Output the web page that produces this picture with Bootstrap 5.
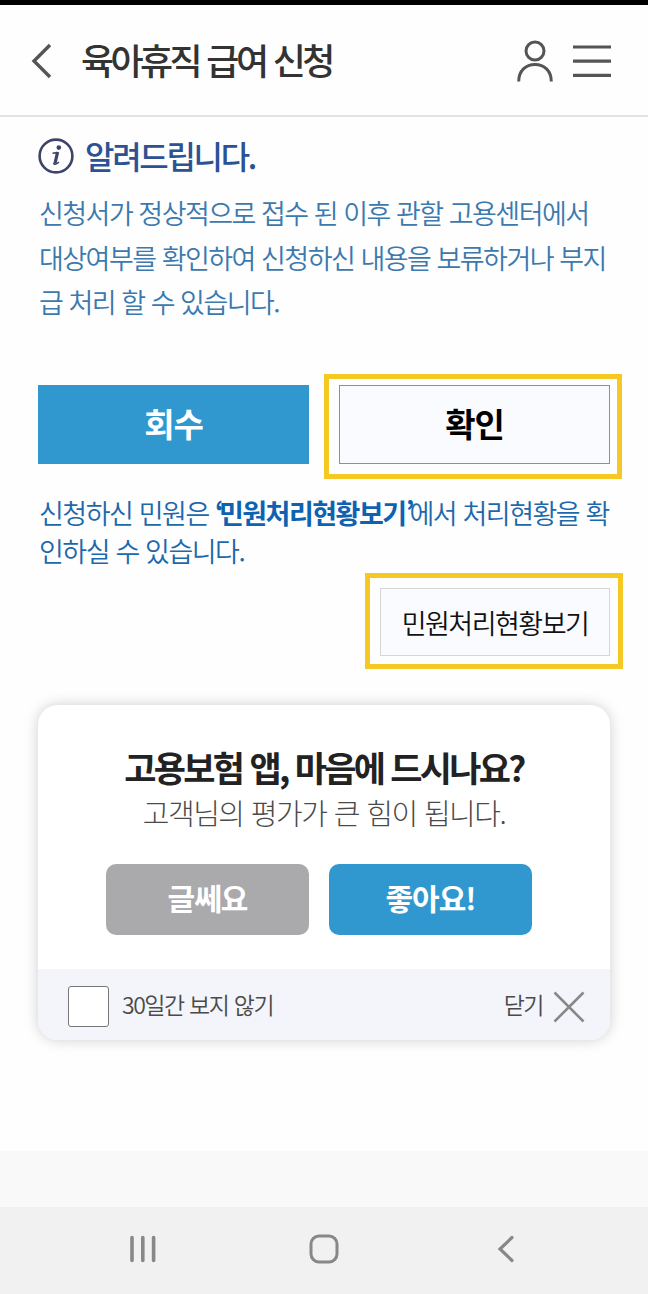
<!DOCTYPE html>
<html lang="ko">
<head>
<meta charset="utf-8">
<meta name="viewport" content="width=device-width, initial-scale=1">
<title>육아휴직 급여 신청</title>
<link rel="stylesheet" href="https://cdn.jsdelivr.net/npm/bootstrap@5.3.0/dist/css/bootstrap.min.css">
<style>
body{font-family:"Noto Sans CJK KR",sans-serif;background:#fefefe;width:648px;height:1294px;overflow:hidden;white-space:nowrap}
svg{display:block;flex:none}
.status-strip{height:5px;background:#000}
.top-bar{height:112px;border-bottom:2px solid #e2e2e2;padding:2px 37px 0 31px}
.page-title{font-size:36px;line-height:50px;font-weight:500;letter-spacing:-3.6px;word-spacing:.8px;color:#333;margin:0 0 4px 28px}
.notice-head{height:50px;margin:14px 0 0 38px}
.notice-title{font-size:32px;line-height:48px;font-weight:500;letter-spacing:-2.3px;color:#2c5294;margin:0 0 3px 11px}
.notice-text{font-size:27px;line-height:44.5px;font-weight:350;letter-spacing:-1.53px;word-spacing:.1px;color:#3b79ae;margin:10px 0 0 39px}
.status-text{font-size:27px;line-height:38px;font-weight:350;letter-spacing:-1.5px;word-spacing:.3px;color:#1d68ab;margin:15px 0 0 39px}
.status-text b{font-weight:700;letter-spacing:-1.5px;color:#0d62b2}
.status-text b span{letter-spacing:-5px}
.action-row{margin:49px 26px 0 38px}
.btn-flat{border-radius:0;padding:0 0 3px;font-size:33px;line-height:70px;font-weight:700;letter-spacing:-1.2px;width:271px;height:79px;border:0}
.btn-blue,.btn-blue:hover{background:#3098cf;color:#fff}
.btn-pale{background:#fafbff;color:#000;border:1px solid #8e9096}
.spot{border:5px solid #f5c824}
.spot-a{padding:6px 7px 10px 10px;width:298px;height:105px}
.spot-b{padding:10px 8px 8px 10px;width:258px;height:96px;margin:3px 25px 0 auto}
.btn-view{background:#fafbff;color:#111;border:1px solid #d4d6dc;border-radius:0;padding:2px 0 0;width:230px;height:68px;font-size:27px;font-weight:350;letter-spacing:-1.5px;line-height:60px}
.rate-card{width:572px;height:335px;margin:36px 0 0 38px;border:0;border-radius:20px;box-shadow:0 0 14px rgba(0,0,0,.19);overflow:hidden;background:#fff}
.rate-title{font-size:35px;line-height:46px;font-weight:700;letter-spacing:-2.7px;color:#222;margin:39px 0 0}
.rate-sub{font-size:29px;line-height:44px;font-weight:300;letter-spacing:-1.5px;word-spacing:.7px;color:#4a4a4a;margin:0}
.rate-row{margin-top:30px;gap:20px;padding-left:68px}
.btn-rate{width:203px;height:71px;border:0;border-radius:10px;padding:0 0 4px;font-size:30px;line-height:60px;font-weight:700;letter-spacing:-1px;color:#fff}
.btn-grey,.btn-grey:hover{background:#aaaaad;color:#fff}
.rate-foot{height:71px;background:#f3f5fb;padding:0 25px 0 30px;font-size:23px;font-weight:350;color:#4a4a4a}
.rate-foot .rate-check{width:41px;height:41px;border:1px solid #777;border-radius:3px;background:#fff;margin:5px 0 0}
.hide-label{letter-spacing:-1.5px;word-spacing:.5px;margin-left:13px}
.nav-gap{height:56px;background:#f9f9f9;margin-top:111px}
.sys-nav{height:87px;background:#f1f1f1;padding:0 133px 3px 129px}
</style>
</head>
<body>
<div class="status-strip"></div>
<header class="top-bar d-flex align-items-center">
  <svg width="22" height="36" viewBox="0 0 22 36" fill="none" stroke="#555" stroke-width="3.4"><path d="M19 2 3 18l16 16"/></svg>
  <h1 class="page-title">육아휴직 급여 신청</h1>
  <svg class="ms-auto" width="36" height="42" viewBox="0 0 36 42" fill="none" stroke="#555" stroke-width="3"><circle cx="18" cy="11" r="9"/><path d="M1.700 41.500C1.700 30.500 9 24.500 18 24.500S34.300 30.500 34.300 41.500"/></svg>
  <svg style="margin-left:20px" width="38" height="34" viewBox="0 0 38 34" stroke="#555" stroke-width="3.200"><path d="M0 3h38M0 17.200h38M0 31.400h38"/></svg>
</header>
<main>
  <div class="notice-head d-flex align-items-center">
    <svg width="36" height="36" viewBox="0 0 36 36" fill="none" stroke="#3c4468"><circle cx="18" cy="18" r="16.400" stroke-width="2.600"/><circle cx="20.800" cy="9.600" r="2.300" fill="#3c4468" stroke="none"/><path d="M14.500 15.300 19.500 14.600" stroke-width="1.600"/><path d="M19.600 14 17 25.500" stroke-width="3.200"/><path d="M15.800 25q.2 3 5.200-.8" stroke-width="1.600"/></svg>
    <h2 class="notice-title">알려드립니다.</h2>
  </div>
  <p class="notice-text">신청서가 정상적으로 접수 된 이후 관할 고용센터에서<br>대상여부를 확인하여 신청하신 내용을 보류하거나 부지<br>급 처리 할 수 있습니다.</p>
  <div class="action-row d-flex justify-content-between">
    <button class="btn btn-flat btn-blue" style="margin-top:11px">회수</button>
    <div class="spot spot-a d-flex"><button class="btn btn-flat btn-pale">확인</button></div>
  </div>
  <p class="status-text">신청하신 민원은 <b><span>‘</span>민원처리현황보기<span>’</span></b>에서 처리현황을 확<br>인하실 수 있습니다.</p>
  <div class="spot spot-b d-flex"><button class="btn btn-view">민원처리현황보기</button></div>
  <section class="rate-card card">
    <h3 class="rate-title text-center">고용보험 앱, 마음에 드시나요?</h3>
    <p class="rate-sub text-center">고객님의 평가가 큰 힘이 됩니다.</p>
    <div class="rate-row d-flex">
      <button class="btn btn-rate btn-grey">글쎄요</button>
      <button class="btn btn-rate btn-blue">좋아요!</button>
    </div>
    <div class="rate-foot d-flex align-items-center mt-auto">
      <input class="rate-check form-check-input" type="checkbox" id="hide30">
      <label class="hide-label" for="hide30">30일간 보지 않기</label>
      <span class="hide-label ms-auto">닫기</span>
      <svg style="margin:5px 0 0 10px" width="32" height="32" viewBox="0 0 32 32" stroke="#888" stroke-width="2.600"><path d="M1.500 1.500l29 29M30.500 1.500l-29 29"/></svg>
    </div>
  </section>
</main>
<div class="nav-gap"></div>
<nav class="sys-nav d-flex align-items-center justify-content-between">
  <svg width="28" height="28" viewBox="0 0 28 28" stroke="#888" stroke-width="3.600" stroke-linecap="round"><path d="M3 2.500v23M13.800 2.500v23M24.600 2.500v23"/></svg>
  <svg style="margin:1px 7px 0 0" width="30" height="30" viewBox="0 0 30 30" fill="none" stroke="#888" stroke-width="3"><rect x="2" y="2" width="26" height="26" rx="8"/></svg>
  <svg width="18" height="28" viewBox="0 0 18 28" fill="none" stroke="#888" stroke-width="3.200" stroke-linecap="round"><path d="M15 2.500 3 14l12 11.500"/></svg>
</nav>
<script src="https://cdn.jsdelivr.net/npm/bootstrap@5.3.0/dist/js/bootstrap.bundle.min.js"></script>
</body>
</html>
